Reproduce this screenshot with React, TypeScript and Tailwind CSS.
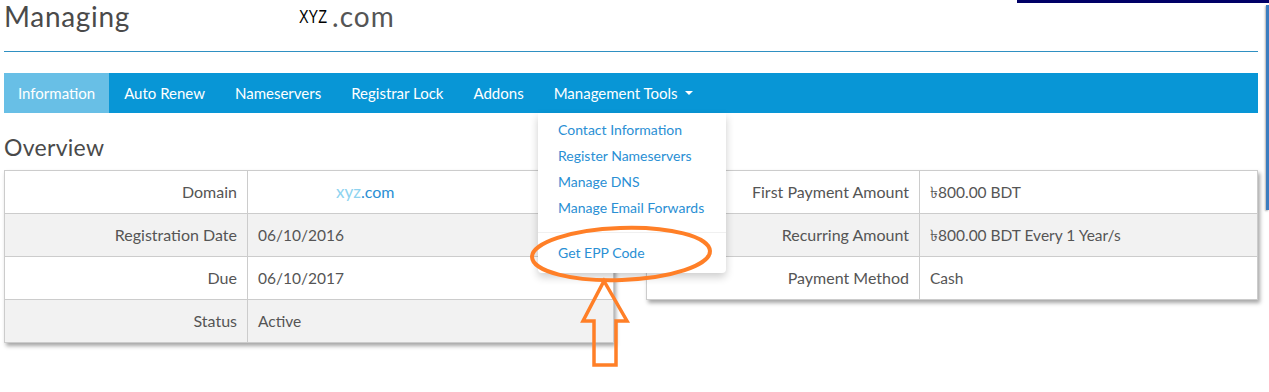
import React from "react";

const leftRows = [
  { label: "Domain", value: "domain" },
  { label: "Registration Date", value: "06/10/2016" },
  { label: "Due", value: "06/10/2017" },
  { label: "Status", value: "Active" },
];

const rightRows = [
  { label: "First Payment Amount", value: "৳800.00 BDT" },
  { label: "Recurring Amount", value: "৳800.00 BDT Every 1 Year/s" },
  { label: "Payment Method", value: "Cash" },
];

const tabs = ["Information", "Auto Renew", "Nameservers", "Registrar Lock", "Addons"];

const menu = ["Contact Information", "Register Nameservers", "Manage DNS", "Manage Email Forwards"];

function Value({ v }: { v: string }) {
  if (v === "domain") {
    return (
      <span className="pl-[78px] text-[16px]">
        <span className="text-[17px] text-[#8ed3f0]">xyz</span>
        <span className="text-[#2a8fd4]">.com</span>
      </span>
    );
  }
  return <span className="text-[15.5px]">{v}</span>;
}

export default function App() {
  return (
    <div className="relative w-[1269px] h-[392px] overflow-hidden bg-white font-['Lato','Noto_Sans','DejaVu_Sans',sans-serif] text-[#555]">
      <div className="absolute right-0 top-0 h-[3px] w-[252px] bg-[#000066]" />
      <div className="absolute right-0 top-[5px] h-[205px] w-[3px] bg-[#3b7dc0] shadow-[-1px_1px_2px_rgba(0,0,0,0.3)]" />

      <div className="w-[1258px] pl-1">
        <div className="flex h-[51px] items-start">
          <h1 className="text-[28px] leading-[33px] tracking-[0.7px] text-[#4a4a4a]">Managing</h1>
          <span className="ml-[169px] mt-[7px] inline-block w-[28px] text-[18px] leading-[20px] text-black font-['Liberation_Sans',sans-serif]">
            <span className="inline-block origin-left scale-x-[0.8]">XYZ</span>
          </span>
          <span className="ml-[5px] text-[28px] leading-[33px] tracking-[1px] text-[#555]">.com</span>
        </div>
        <div className="h-px bg-[#2f90c2]" />

        <nav className="mt-[21px] flex h-10 items-stretch bg-[#0896d6] text-[15px] text-white">
          {tabs.map((t, i) => (
            <div
              key={t}
              className={
                i === 0
                  ? "flex items-center bg-[#68bfe6] px-[14px]"
                  : "flex items-center px-[15px]"
              }
            >
              {t}
            </div>
          ))}
          <div className="flex items-center px-[15px]">
            Management Tools
            <span className="ml-[7px] inline-block h-0 w-0 border-x-[4px] border-t-[4px] border-x-transparent border-t-white" />
          </div>
        </nav>

        <h2 className="mt-[21px] text-[23px] leading-[26px] tracking-[0.3px] text-[#4a4a4a]">Overview</h2>

        <div className="mt-[10px] flex items-start text-[16px]">
          <div className="w-[610px] border border-[#ccc] shadow-[2px_3px_4px_rgba(0,0,0,0.35)]">
            {leftRows.map((r, i) => (
              <div
                key={r.label}
                className={
                  "flex items-center " +
                  (i % 2 === 1 ? "bg-[#f2f2f2] " : "bg-white ") +
                  (i > 0 ? "h-[43px] border-t border-[#ccc]" : "h-[42px]")
                }
              >
                <div className="flex h-full w-[243px] items-center justify-end border-r border-[#ccc] pr-[10px]">
                  {r.label}
                </div>
                <div className="pl-[10px]">
                  <Value v={r.value} />
                </div>
              </div>
            ))}
          </div>

          <div className="ml-[32px] w-[612px] border border-[#ccc] shadow-[2px_3px_4px_rgba(0,0,0,0.35)]">
            {rightRows.map((r, i) => (
              <div
                key={r.label}
                className={
                  "flex items-center " +
                  (i % 2 === 1 ? "bg-[#f2f2f2] " : "bg-white ") +
                  (i > 0 ? "h-[43px] border-t border-[#ccc]" : "h-[42px]")
                }
              >
                <div className="flex h-full w-[273px] items-center justify-end border-r border-[#ccc] pr-[10px]">
                  {r.label}
                </div>
                <div className="pl-[10px]">
                  <Value v={r.value} />
                </div>
              </div>
            ))}
          </div>
        </div>
      </div>

      {/* dropdown menu */}
      <div className="absolute left-[538px] top-[113px] w-[188px] rounded-b-[4px] bg-white pb-[10px] pt-[7px] text-[14px] text-[#2a8fd4] shadow-[0_4px_8px_rgba(0,0,0,0.2)]">
        {menu.map((m) => (
          <div key={m} className="h-[26px] pl-[20px] leading-[20px]">
            {m}
          </div>
        ))}
        <div className="mb-[10px] mt-[8px] h-px bg-[#f0f0f0]" />
        <div className="h-[20px] pl-[20px] leading-[20px]">Get EPP Code</div>
      </div>

      {/* annotations */}
      <svg className="pointer-events-none absolute left-0 top-0" width="1269" height="392">
        <ellipse cx="621" cy="254" rx="89" ry="26" fill="none" stroke="#ff7f27" strokeWidth="4" transform="rotate(-2 621 254)" />
        <polygon
          points="604,281 627,321 616,321 616,365 594,365 594,321 583,321"
          fill="none"
          stroke="#ff7f27"
          strokeWidth="3.5"
          strokeLinejoin="miter"
        />
      </svg>
    </div>
  );
}
